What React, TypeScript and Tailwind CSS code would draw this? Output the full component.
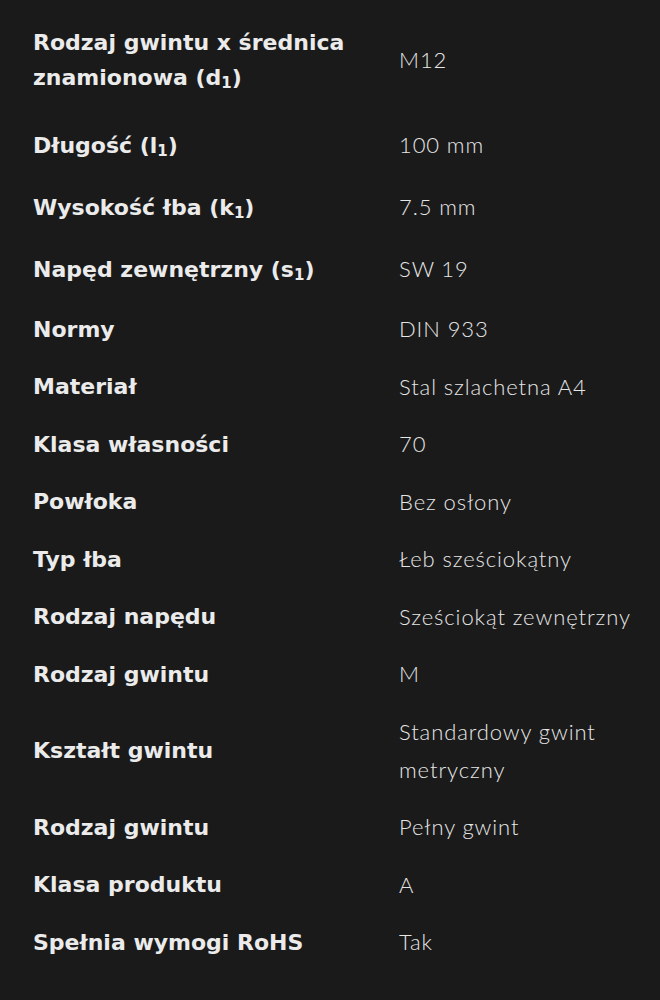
import React from "react";

type Row = { label: React.ReactNode; value: React.ReactNode; h: string };

const Sub = ({ c }: { c: string }) => (
  <sub className="text-[15px] leading-none relative top-[3px] align-baseline">{c}</sub>
);

const rows: Row[] = [
  {
    label: (
      <>
        Rodzaj gwintu x średnica
        <br />
        znamionowa (d<Sub c="1" />)
      </>
    ),
    value: "M12",
    h: "min-h-[108px]",
  },
  { label: <>Długość (l<Sub c="1" />)</>, value: "100 mm", h: "min-h-[62px]" },
  { label: <>Wysokość łba (k<Sub c="1" />)</>, value: "7.5 mm", h: "min-h-[62px]" },
  { label: <>Napęd zewnętrzny (s<Sub c="1" />)</>, value: "SW 19", h: "min-h-[62px]" },
  { label: "Normy", value: "DIN 933", h: "min-h-[58px]" },
  { label: "Materiał", value: "Stal szlachetna A4", h: "min-h-[57.5px]" },
  { label: "Klasa własności", value: "70", h: "min-h-[57.5px]" },
  { label: "Powłoka", value: "Bez osłony", h: "min-h-[57.5px]" },
  { label: "Typ łba", value: "Łeb sześciokątny", h: "min-h-[57.5px]" },
  { label: "Rodzaj napędu", value: "Sześciokąt zewnętrzny", h: "min-h-[57.5px]" },
  { label: "Rodzaj gwintu", value: "M", h: "min-h-[57.5px]" },
  {
    label: "Kształt gwintu",
    value: (
      <>
        Standardowy gwint
        <br />
        metryczny
      </>
    ),
    h: "min-h-[95.5px]",
  },
  { label: "Rodzaj gwintu", value: "Pełny gwint", h: "min-h-[57.5px]" },
  { label: "Klasa produktu", value: "A", h: "min-h-[57.5px]" },
  { label: "Spełnia wymogi RoHS", value: "Tak", h: "min-h-[57.5px]" },
];

export default function App() {
  return (
    <div className="w-[660px] h-[1000px] bg-[#1a1a1a] overflow-hidden pt-[6px]">
      {rows.map((r, i) => (
        <div key={i} className={`flex items-center ${r.h}`}>
          <div className="w-[399px] shrink-0 pl-[33px] font-['DejaVu_Sans',sans-serif] font-bold text-[22px] leading-[35px] text-[#ebebeb]">
            {r.label}
          </div>
          <div className="flex-1 font-['Lato','DejaVu_Sans',sans-serif] font-light text-[22px] tracking-[0.9px] leading-[38px] text-[#e6e6e6]">
            {r.value}
          </div>
        </div>
      ))}
    </div>
  );
}
